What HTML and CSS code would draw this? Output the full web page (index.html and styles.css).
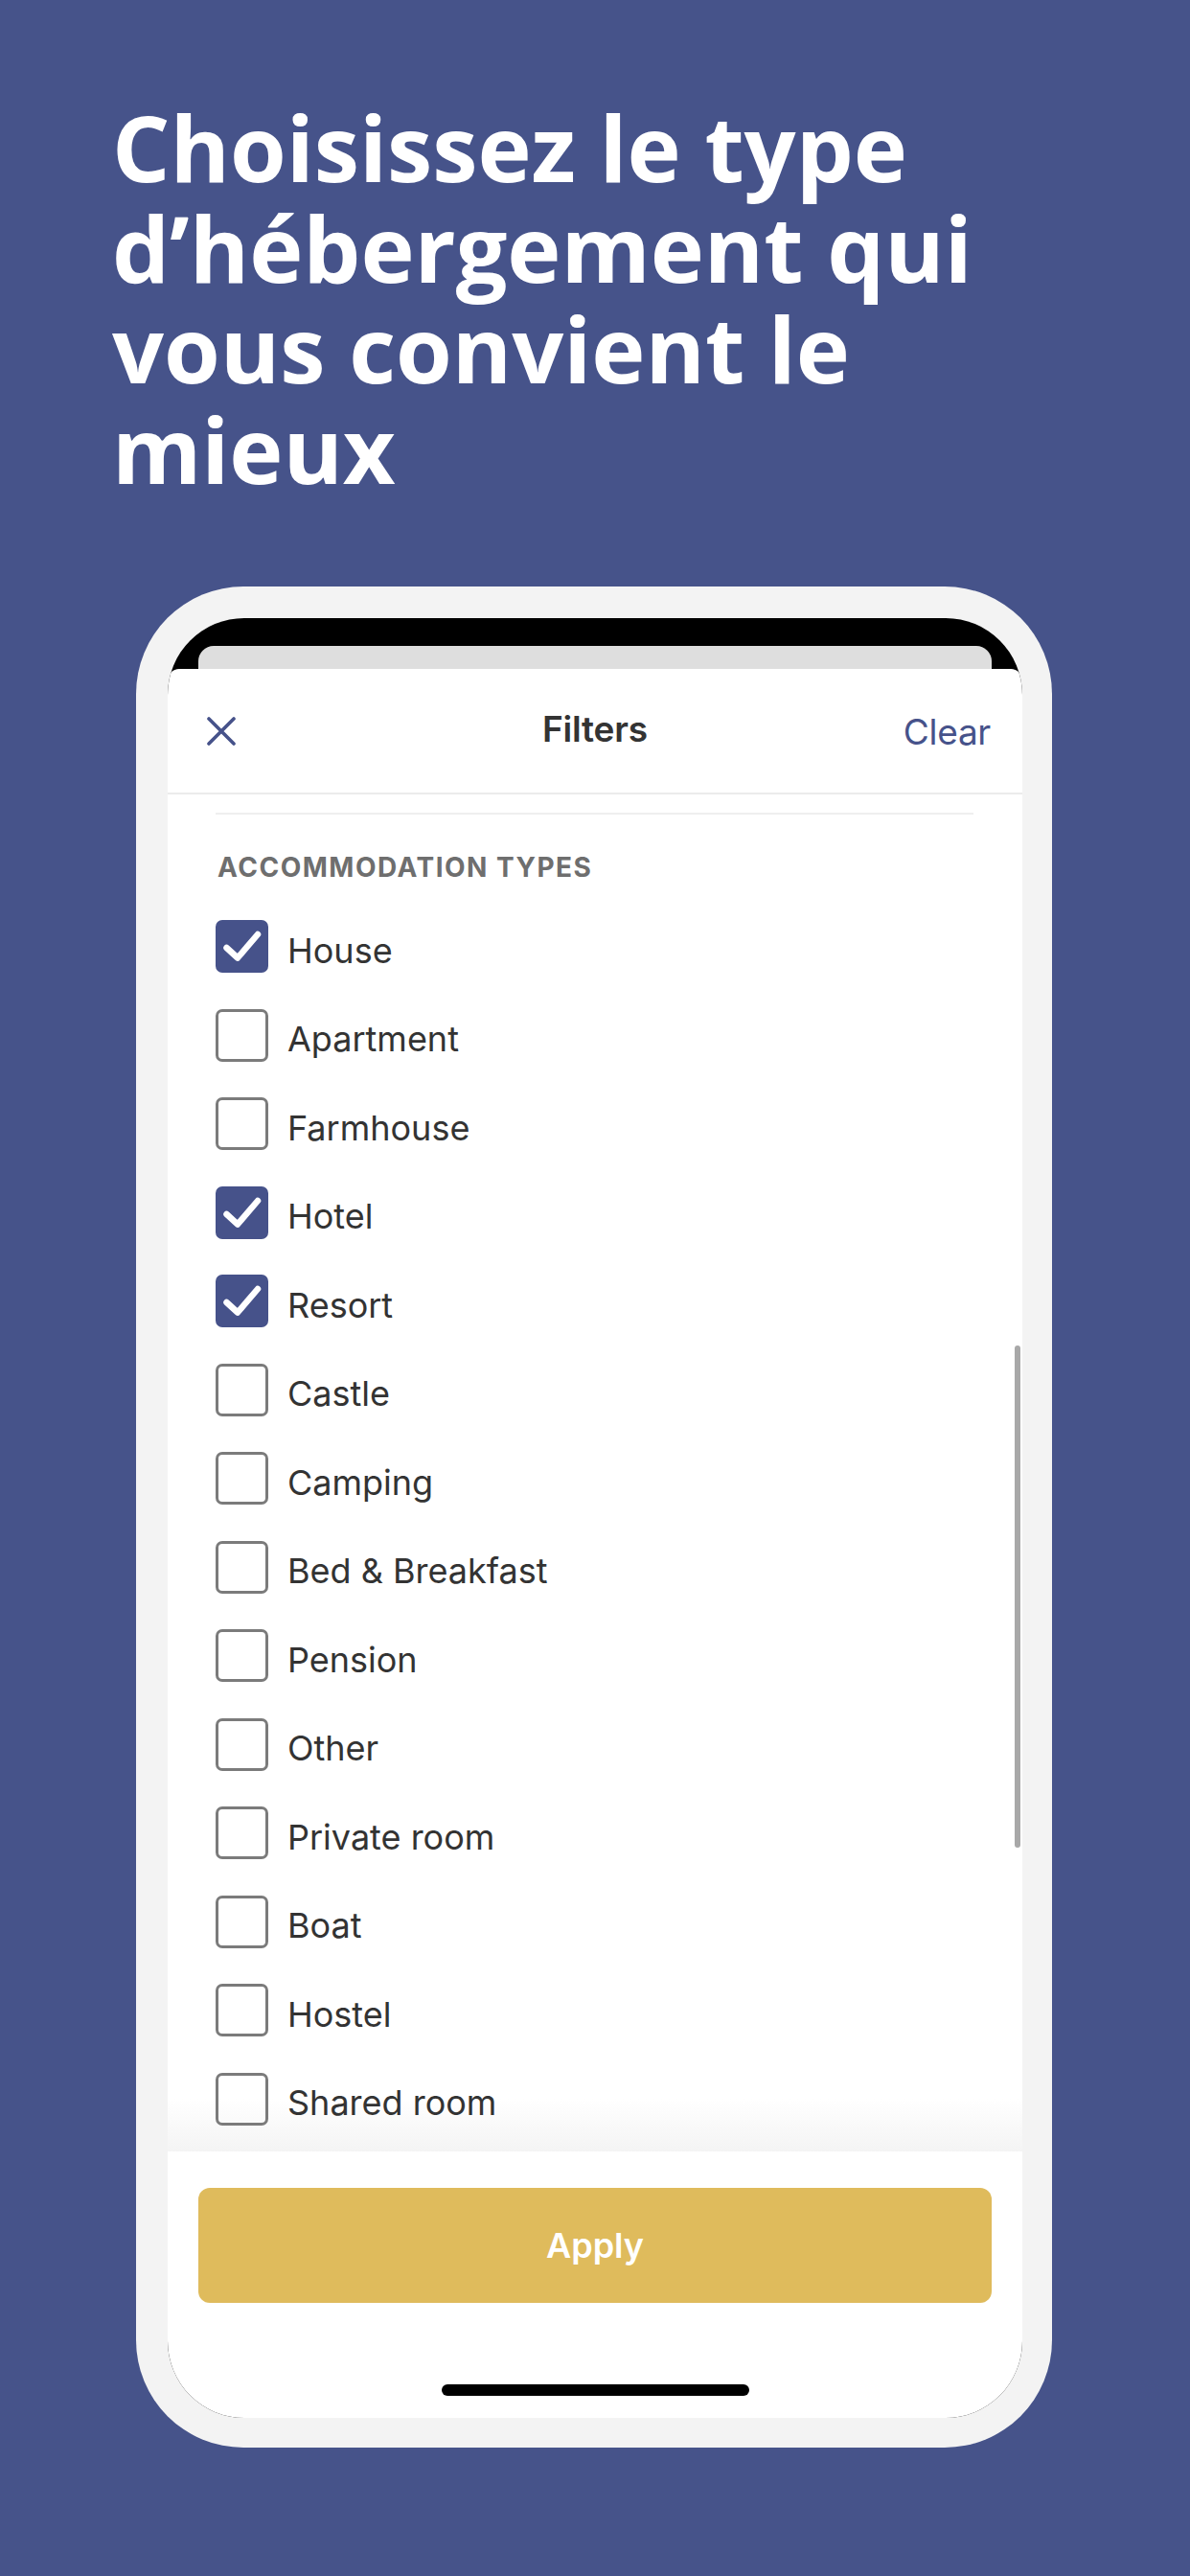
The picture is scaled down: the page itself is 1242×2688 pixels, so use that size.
FILE: index.html
```html
<!DOCTYPE html>
<html lang="fr">
<head>
<meta charset="utf-8">
<title>Filters</title>
<link rel="stylesheet" href="styles.css">
</head>
<body>
<div class="page">
  <h1 class="headline">Choisissez le type<br>d’hébergement qui<br>vous convient le<br>mieux</h1>
  <div class="phone">
    <div class="screen">
      <div class="card-behind"></div>
      <div class="sheet">
        <header class="sheet-header">
          <svg class="close-icon" width="30" height="30" viewBox="0 0 30 30"><path d="M2 2 L28 28 M28 2 L2 28" stroke="#46528a" stroke-width="3.6" stroke-linecap="round" fill="none"/></svg>
          <div class="sheet-title">Filters</div>
          <div class="clear-btn">Clear</div>
        </header>
        <div class="list-area">
          <div class="fade"></div>
          <div class="divider"></div>
          <div class="section-label">ACCOMMODATION TYPES</div>
          <ul class="options">
            <li class="option"><span class="box checked"><svg width="55" height="55" viewBox="0 0 55 55"><path d="M11.5 29 L23 39.5 L44 15" stroke="#fff" stroke-width="6.5" stroke-linecap="round" stroke-linejoin="round" fill="none"/></svg></span><span class="option-label">House</span></li>
            <li class="option"><span class="box"></span><span class="option-label">Apartment</span></li>
            <li class="option"><span class="box"></span><span class="option-label">Farmhouse</span></li>
            <li class="option"><span class="box checked"><svg width="55" height="55" viewBox="0 0 55 55"><path d="M11.5 29 L23 39.5 L44 15" stroke="#fff" stroke-width="6.5" stroke-linecap="round" stroke-linejoin="round" fill="none"/></svg></span><span class="option-label">Hotel</span></li>
            <li class="option"><span class="box checked"><svg width="55" height="55" viewBox="0 0 55 55"><path d="M11.5 29 L23 39.5 L44 15" stroke="#fff" stroke-width="6.5" stroke-linecap="round" stroke-linejoin="round" fill="none"/></svg></span><span class="option-label">Resort</span></li>
            <li class="option"><span class="box"></span><span class="option-label">Castle</span></li>
            <li class="option"><span class="box"></span><span class="option-label">Camping</span></li>
            <li class="option"><span class="box"></span><span class="option-label">Bed &amp; Breakfast</span></li>
            <li class="option"><span class="box"></span><span class="option-label">Pension</span></li>
            <li class="option"><span class="box"></span><span class="option-label">Other</span></li>
            <li class="option"><span class="box"></span><span class="option-label">Private room</span></li>
            <li class="option"><span class="box"></span><span class="option-label">Boat</span></li>
            <li class="option"><span class="box"></span><span class="option-label">Hostel</span></li>
            <li class="option"><span class="box"></span><span class="option-label">Shared room</span></li>
          </ul>
          <div class="scrollbar"></div>
        </div>
        <footer class="sheet-footer">
          <div class="apply-btn">Apply</div>
          <div class="home-indicator"></div>
        </footer>
      </div>
    </div>
  </div>
</div>
</body>
</html>
```

FILE: styles.css
```css
* { box-sizing: border-box; }
html, body { margin: 0; padding: 0; }
body {
  background: #46538a;
  width: 1242px;
  height: 2688px;
  overflow: hidden;
}
.page {
  display: flex;
  flex-direction: column;
}
.headline {
  margin: 0;
  padding: 101px 0 0 117px;
  font-family: "Open Sans", sans-serif;
  font-weight: 700;
  font-size: 95px;
  line-height: 105px;
  color: #ffffff;
  letter-spacing: 0;
}
.phone {
  margin: 91px 0 0 142px;
  width: 956px;
  height: 1942px;
  background: #f3f3f3;
  border-radius: 112px;
  padding: 33px 31px 31px 33px;
  display: flex;
}
.screen {
  flex: 1;
  background: #000;
  border-radius: 80px;
  overflow: hidden;
  display: flex;
  flex-direction: column;
  position: relative;
}
.card-behind {
  margin: 29px 32px 0;
  height: 24px;
  background: #dedede;
  border-radius: 16px 16px 0 0;
  flex-shrink: 0;
}
.sheet {
  flex: 1;
  background: #fff;
  border-radius: 12px 12px 0 0;
  display: flex;
  flex-direction: column;
  font-family: "Inter", "Roboto", sans-serif;
}
.sheet-header {
  height: 131px;
  flex-shrink: 0;
  border-bottom: 2px solid #ececec;
  display: flex;
  align-items: center;
  justify-content: space-between;
  padding: 0 33px 0 41px;
  position: relative;
}
.close-icon { display: block; margin-top: 1px; }
.sheet-title {
  position: absolute;
  left: 0;
  right: 0;
  text-align: center;
  font-size: 37px;
  font-weight: 600;
  color: #333333;
  top: 41px;
  line-height: 44px;
  letter-spacing: -0.2px;
}
.clear-btn {
  font-size: 37px;
  color: #46528a;
  line-height: 44px;
  margin-top: 2px;
  letter-spacing: -0.3px;
}
.list-area {
  flex: 1;
  position: relative;
  overflow: hidden;
  padding: 0 51px 0 50px;
}
.divider {
  margin-top: 19px;
  height: 2px;
  background: #efefef;
}
.section-label {
  margin-top: 38px;
  height: 34px;
  line-height: 34px;
  font-size: 28px;
  font-weight: 700;
  color: #6e6e6e;
  letter-spacing: 1.5px;
  padding-left: 2px;
}
.options {
  list-style: none;
  margin: 19.25px 0 0;
  padding: 0;
  position: relative;
  z-index: 1;
}
.option {
  height: 92.5px;
  display: flex;
  align-items: center;
}
.box {
  width: 55px;
  height: 55px;
  border-radius: 7px;
  border: 3px solid #7b7b7b;
  flex-shrink: 0;
  display: flex;
  align-items: center;
  justify-content: center;
}
.box.checked {
  background: #46528a;
  border: none;
}
.box svg { display: block; }
.option-label {
  margin-left: 20px;
  padding-top: 8px;
  font-size: 36px;
  line-height: 44px;
  color: #333333;
  letter-spacing: 0;
}
.fade {
  position: absolute;
  left: 0;
  right: 0;
  bottom: 0;
  height: 55px;
  background: linear-gradient(rgba(243,243,243,0), #f4f4f4);
  z-index: 0;
}
.scrollbar {
  position: absolute;
  top: 575px;
  right: 2px;
  width: 6px;
  height: 524px;
  background: #a8a8a8;
  border-radius: 3px;
  z-index: 2;
}
.sheet-footer {
  height: 278px;
  flex-shrink: 0;
  padding-top: 38px;
  display: flex;
  flex-direction: column;
  align-items: center;
}
.apply-btn {
  align-self: stretch;
  margin: 0 32px;
  height: 120px;
  background: #dfbb5c;
  border-radius: 12px;
  color: #ffffff;
  font-size: 36px;
  font-weight: 600;
  display: flex;
  align-items: center;
  justify-content: center;
}
.home-indicator {
  margin-top: 85px;
  width: 321px;
  height: 12px;
  background: #000;
  border-radius: 6px;
}
```
